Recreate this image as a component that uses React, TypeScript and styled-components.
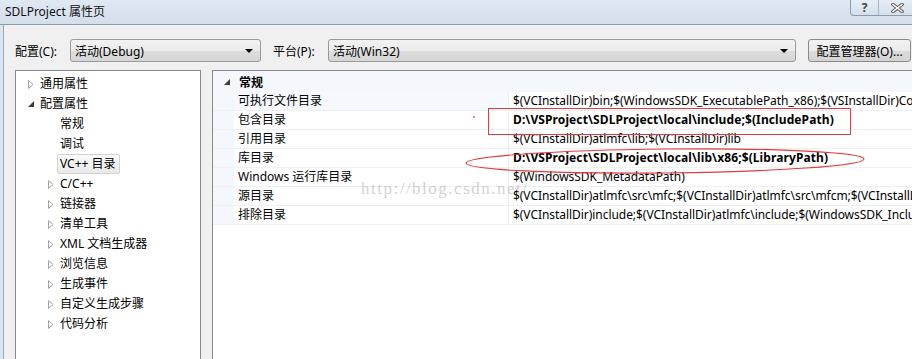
import styled, { createGlobalStyle } from 'styled-components'

const GlobalStyle = createGlobalStyle`
  body {
    margin: 0;
    font-family: "Noto Sans", "Noto Sans CJK SC", sans-serif;
    font-size: 12px;
    color: #000;
  }
`

const FONT = `"Noto Sans", "Noto Sans CJK SC", sans-serif`

type Expander = 'collapsed' | 'expanded' | 'none'

const tree: { label: string; level: 1 | 2; expander: Expander; selected?: boolean }[] = [
  { label: '通用属性', level: 1, expander: 'collapsed' },
  { label: '配置属性', level: 1, expander: 'expanded' },
  { label: '常规', level: 2, expander: 'none' },
  { label: '调试', level: 2, expander: 'none' },
  { label: 'VC++ 目录', level: 2, expander: 'none', selected: true },
  { label: 'C/C++', level: 2, expander: 'collapsed' },
  { label: '链接器', level: 2, expander: 'collapsed' },
  { label: '清单工具', level: 2, expander: 'collapsed' },
  { label: 'XML 文档生成器', level: 2, expander: 'collapsed' },
  { label: '浏览信息', level: 2, expander: 'collapsed' },
  { label: '生成事件', level: 2, expander: 'collapsed' },
  { label: '自定义生成步骤', level: 2, expander: 'collapsed' },
  { label: '代码分析', level: 2, expander: 'collapsed' },
]

const props: { name: string; value: string; bold?: boolean; hot?: boolean }[] = [
  { name: '可执行文件目录', value: '$(VCInstallDir)bin;$(WindowsSDK_ExecutablePath_x86);$(VSInstallDir)Common7\\Tools\\bin;$(VSInstallDir)Common7\\tools', hot: true },
  { name: '包含目录', value: 'D:\\VSProject\\SDLProject\\local\\include;$(IncludePath)', bold: true },
  { name: '引用目录', value: '$(VCInstallDir)atlmfc\\lib;$(VCInstallDir)lib' },
  { name: '库目录', value: 'D:\\VSProject\\SDLProject\\local\\lib\\x86;$(LibraryPath)', bold: true },
  { name: 'Windows 运行库目录', value: '$(WindowsSDK_MetadataPath)' },
  { name: '源目录', value: '$(VCInstallDir)atlmfc\\src\\mfc;$(VCInstallDir)atlmfc\\src\\mfcm;$(VCInstallDir)atlmfc\\src\\atl;$(VCInstallDir)crt\\src' },
  { name: '排除目录', value: '$(VCInstallDir)include;$(VCInstallDir)atlmfc\\include;$(WindowsSDK_IncludePath);$(MSBuildToolsPath32)' },
]

function App() {
  return (
    <>
      <GlobalStyle />
      <Window>
        <TitleBar>
          <Title>SDLProject 属性页</Title>
          <CaptionButtons>
            <CaptionButton>?</CaptionButton>
            <CaptionButton $last>
              <svg width="13" height="10" viewBox="0 0 13 10">
                <path d="M2 1.5 L11 8.5 M11 1.5 L2 8.5" stroke="#555" strokeWidth="3.4" strokeLinecap="square" />
                <path d="M2 1.5 L11 8.5 M11 1.5 L2 8.5" stroke="#fff" strokeWidth="1.5" strokeLinecap="square" />
              </svg>
            </CaptionButton>
          </CaptionButtons>
        </TitleBar>

        <Frame>
          <Body>
            <Toolbar>
              <FieldLabel>配置(C):</FieldLabel>
              <Combo $width={191}>
                活动(Debug)
                <ComboArrow />
              </Combo>
              <FieldLabel $gap={12}>平台(P):</FieldLabel>
              <Combo $width={468}>
                活动(Win32)
                <ComboArrow />
              </Combo>
              <Button>配置管理器(O)...</Button>
            </Toolbar>

            <Panels>
              <TreePanel>
                {tree.map((t) => (
                  <TreeRow key={t.label} $level={t.level}>
                    <ExpanderBox>
                      {t.expander === 'collapsed' && (
                        <svg width="6" height="9" viewBox="0 0 6 9">
                          <path d="M0.5 0.5 L5 4.5 L0.5 8.5 Z" fill="#fff" stroke="#a6a6a6" />
                        </svg>
                      )}
                      {t.expander === 'expanded' && (
                        <svg width="6" height="6" viewBox="0 0 6 6">
                          <path d="M6 0 L6 6 L0 6 Z" fill="#3c3c3c" />
                        </svg>
                      )}
                    </ExpanderBox>
                    <TreeLabel $selected={!!t.selected}>{t.label}</TreeLabel>
                  </TreeRow>
                ))}
              </TreePanel>

              <GridPanel>
                <CategoryRow>
                  <svg width="6" height="6" viewBox="0 0 6 6">
                    <path d="M6 0 L6 6 L0 6 Z" fill="#3c3c3c" />
                  </svg>
                  <CategoryName>常规</CategoryName>
                </CategoryRow>
                {props.map((p) => (
                  <PropRow key={p.name}>
                    <Margin />
                    <PropName $hot={!!p.hot}>{p.name}</PropName>
                    <PropValue $bold={!!p.bold}>{p.value}</PropValue>
                  </PropRow>
                ))}
              </GridPanel>
            </Panels>
          </Body>
        </Frame>

        {/* blog watermark + hand-drawn red marks lie over the grid */}
        <Watermark>http://blog.csdn.net/</Watermark>
        <RedBox />
        <RedDot />
        <RedEllipse width="404" height="30" viewBox="0 0 404 30">
          <ellipse cx="202" cy="15" rx="199" ry="12" fill="none" stroke="#e43a3a" strokeWidth="1.2" transform="rotate(-0.6 202 15)" />
        </RedEllipse>
      </Window>
    </>
  )
}

export default App

// ------------------ STYLING ------------------

const Window = styled.div`
  position: relative;
  width: 912px;
  height: 359px;
  overflow: hidden;
  background: #dbe5f0;
  font-family: ${FONT};
`

const TitleBar = styled.div`
  height: 24px;
  display: flex;
  justify-content: space-between;
  align-items: flex-start;
  background: linear-gradient(#dfe8f3, #d4dfec);
  border-bottom: 1px solid #8e9bab;
`

const Title = styled.div`
  padding: 3px 0 0 5px;
  font-size: 12px;
  line-height: 18px;
  color: #111;
`

const CaptionButtons = styled.div`
  display: flex;
  margin-right: -4px;
  height: 15px;
  border: 1px solid #8e99aa;
  border-top: none;
  border-radius: 0 0 4px 4px;
  background: linear-gradient(#e6edf5, #d6e0ec);
`

const CaptionButton = styled.div<{ $last?: boolean }>`
  width: ${(p) => (p.$last ? '36px' : '27px')};
  display: flex;
  align-items: center;
  justify-content: center;
  font-size: 12px;
  font-weight: 700;
  line-height: 14px;
  color: #444;
  border-left: ${(p) => (p.$last ? '1px solid #a9b4c3' : 'none')};
`

const Frame = styled.div`
  padding-left: 3px;
  height: 334px;
`

const Body = styled.div`
  height: 100%;
  background: #f0f0f0;
  border-left: 1px solid #9da7b3;
  padding-left: 11px;
  display: flex;
  flex-direction: column;
`

const Toolbar = styled.div`
  display: flex;
  align-items: center;
  height: 23px;
  margin-top: 14px;
`

const FieldLabel = styled.div<{ $gap?: number }>`
  margin-left: ${(p) => p.$gap ?? 0}px;
  width: 55px;
  font-size: 12px;
  white-space: nowrap;
`

const Combo = styled.div<{ $width: number }>`
  position: relative;
  box-sizing: border-box;
  width: ${(p) => p.$width}px;
  height: 23px;
  padding-left: 4px;
  display: flex;
  align-items: center;
  border: 1px solid #9a9a9a;
  border-radius: 3px;
  background: linear-gradient(#f2f2f2 0%, #ebebeb 50%, #dddddd 51%, #d6d6d6 100%);
  font-size: 12px;
`

const ComboArrow = styled.span`
  position: absolute;
  right: 7px;
  top: 9px;
  width: 0;
  height: 0;
  border-left: 4px solid transparent;
  border-right: 4px solid transparent;
  border-top: 4px solid #000;
`

const Button = styled.div`
  box-sizing: border-box;
  margin-left: 12px;
  width: 103px;
  height: 23px;
  display: flex;
  align-items: center;
  justify-content: center;
  border: 1px solid #8a8a8a;
  border-radius: 3px;
  background: linear-gradient(#f2f2f2 0%, #ebebeb 50%, #dddddd 51%, #d2d2d2 100%);
  font-size: 12px;
`

const Panels = styled.div`
  display: flex;
  gap: 11px;
  margin-top: 8px;
  flex: 1;
`

const TreePanel = styled.div`
  box-sizing: border-box;
  width: 186px;
  height: 320px;
  padding-top: 3px;
  background: #fff;
  border: 1px solid #828790;
`

const TreeRow = styled.div<{ $level: 1 | 2 }>`
  height: 20px;
  display: flex;
  align-items: center;
  padding-left: ${(p) => (p.$level === 1 ? 12 : 32)}px;
`

const ExpanderBox = styled.div`
  width: 9px;
  height: 20px;
  display: flex;
  align-items: center;
`

const TreeLabel = styled.div<{ $selected: boolean }>`
  height: 18px;
  line-height: 18px;
  padding: 0 3px 0 2px;
  font-size: 12px;
  white-space: nowrap;
  border: 1px solid ${(p) => (p.$selected ? '#d2d2d2' : 'transparent')};
  border-radius: 2px;
  background: ${(p) => (p.$selected ? 'linear-gradient(#fafafa, #e9e9e9)' : 'transparent')};
`

const GridPanel = styled.div`
  flex: 1;
  height: 320px;
  background: #fff;
  border: 1px solid #828790;
  border-right: none;
  overflow: hidden;
`

const CategoryRow = styled.div`
  height: 21px;
  display: flex;
  align-items: center;
  padding-left: 11px;
  background: #f4f7fb;
`

const CategoryName = styled.div`
  margin-left: 9px;
  font-weight: 700;
  font-size: 12px;
`

const PropRow = styled.div`
  display: grid;
  grid-template-columns: 21px 274px 1fr;
  height: 19px;
  border-bottom: 1px solid #eef0f3;
  box-sizing: border-box;
`

const Margin = styled.div`
  background: #f4f7fb;
`

const PropName = styled.div<{ $hot: boolean }>`
  padding-left: 4px;
  line-height: 18px;
  font-size: 12px;
  white-space: nowrap;
  background: ${(p) => (p.$hot ? '#f5f8fc' : '#fff')};
`

const PropValue = styled.div<{ $bold: boolean }>`
  padding-left: 4px;
  line-height: 18px;
  font-size: 12px;
  white-space: nowrap;
  overflow: hidden;
  font-weight: ${(p) => (p.$bold ? 700 : 400)};
  letter-spacing: ${(p) => (p.$bold ? '0.1px' : '-0.05px')};
  border-left: 1px solid #eef0f3;
`

const Watermark = styled.div`
  position: absolute;
  left: 361px;
  top: 179px;
  font-family: "Liberation Serif", serif;
  font-size: 17px;
  letter-spacing: 1.5px;
  color: rgba(140, 140, 140, 0.4);
  pointer-events: none;
`

const RedBox = styled.div`
  position: absolute;
  left: 488px;
  top: 108px;
  width: 361px;
  height: 25px;
  border: 1.5px solid #e43a3a;
`

const RedDot = styled.div`
  position: absolute;
  left: 473px;
  top: 116px;
  width: 2px;
  height: 2px;
  background: #ef6060;
  border-radius: 1px;
`

const RedEllipse = styled.svg`
  position: absolute;
  left: 463px;
  top: 146px;
`
